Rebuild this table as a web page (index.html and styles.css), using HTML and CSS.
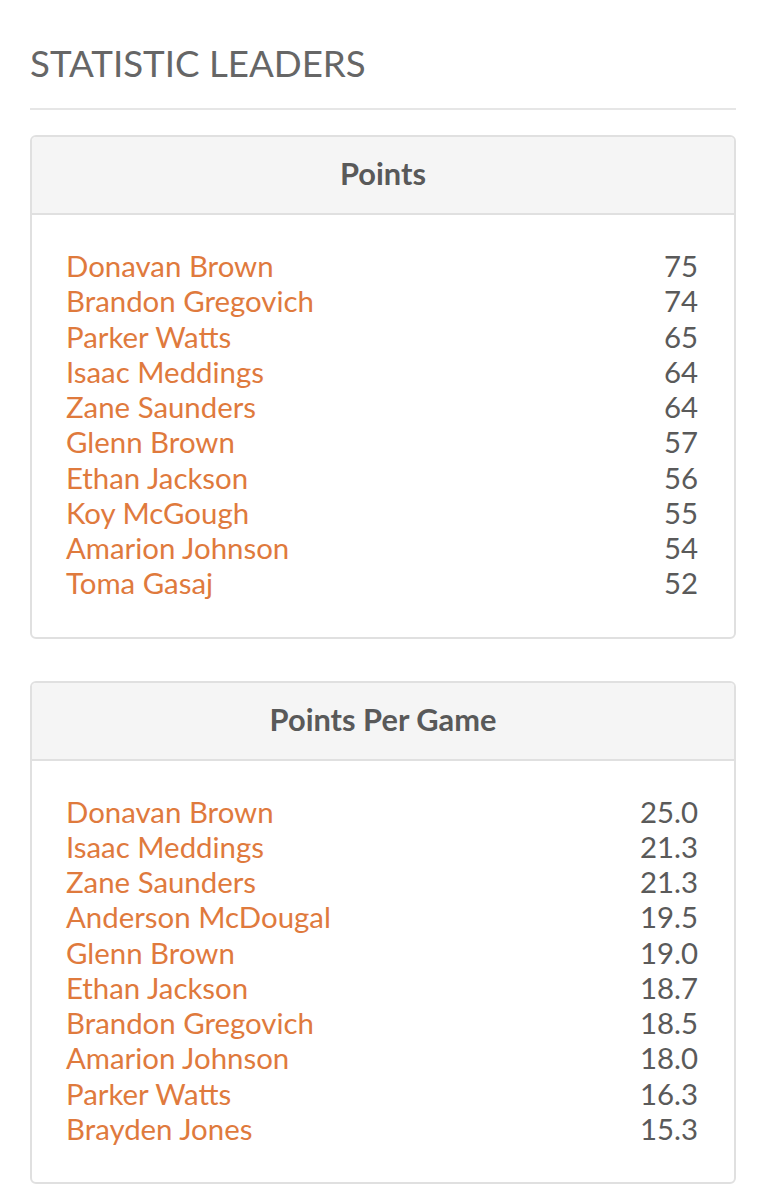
FILE: index.html
```html
<!DOCTYPE html>
<html>
<head>
<meta charset="utf-8">
<link rel="stylesheet" href="styles.css">
</head>
<body>
<div class="page">
  <h2 class="title">STATISTIC LEADERS</h2>
  <div class="panel">
    <div class="panel-head">Points</div>
    <ul class="list">
      <li><a>Donavan Brown</a><span>75</span></li>
      <li><a>Brandon Gregovich</a><span>74</span></li>
      <li><a>Parker Watts</a><span>65</span></li>
      <li><a>Isaac Meddings</a><span>64</span></li>
      <li><a>Zane Saunders</a><span>64</span></li>
      <li><a>Glenn Brown</a><span>57</span></li>
      <li><a>Ethan Jackson</a><span>56</span></li>
      <li><a>Koy McGough</a><span>55</span></li>
      <li><a>Amarion Johnson</a><span>54</span></li>
      <li><a>Toma Gasaj</a><span>52</span></li>
    </ul>
  </div>
  <div class="panel">
    <div class="panel-head">Points Per Game</div>
    <ul class="list">
      <li><a>Donavan Brown</a><span>25.0</span></li>
      <li><a>Isaac Meddings</a><span>21.3</span></li>
      <li><a>Zane Saunders</a><span>21.3</span></li>
      <li><a>Anderson McDougal</a><span>19.5</span></li>
      <li><a>Glenn Brown</a><span>19.0</span></li>
      <li><a>Ethan Jackson</a><span>18.7</span></li>
      <li><a>Brandon Gregovich</a><span>18.5</span></li>
      <li><a>Amarion Johnson</a><span>18.0</span></li>
      <li><a>Parker Watts</a><span>16.3</span></li>
      <li><a>Brayden Jones</a><span>15.3</span></li>
    </ul>
  </div>
</div>
</body>
</html>
```

FILE: styles.css
```css
* { box-sizing: border-box; }
html, body { margin: 0; padding: 0; background: #fff; }
body { font-family: Lato, "Liberation Sans", sans-serif; color: #5e5e5e; }
.page { padding: 0 30px; }
.title {
  margin: 0;
  padding-top: 41px;
  padding-bottom: 23px;
  font-size: 36.7px;
  line-height: 44px;
  font-weight: 400;
  color: #666;
  border-bottom: 2px solid #e6e6e6;
  margin-bottom: 25px;
}
.panel {
  border: 2px solid #e0e0e0;
  border-radius: 6px;
  margin-bottom: 42px;
  overflow: hidden;
}
.panel-head {
  background: #f5f5f5;
  border-bottom: 2px solid #e0e0e0;
  height: 78px;
  padding-bottom: 3px;
  display: flex;
  align-items: center;
  justify-content: center;
  font-size: 30.8px;
  font-weight: 700;
  color: #595959;
}
.list {
  list-style: none;
  margin: 0;
  padding: 33px 36px 36px 34px;
}
.list li {
  display: flex;
  justify-content: space-between;
  font-size: 29.4px;
  line-height: 35.25px;
}
.list a { color: #df7a3d; }
.list span { color: #5a5a5a; }
```
